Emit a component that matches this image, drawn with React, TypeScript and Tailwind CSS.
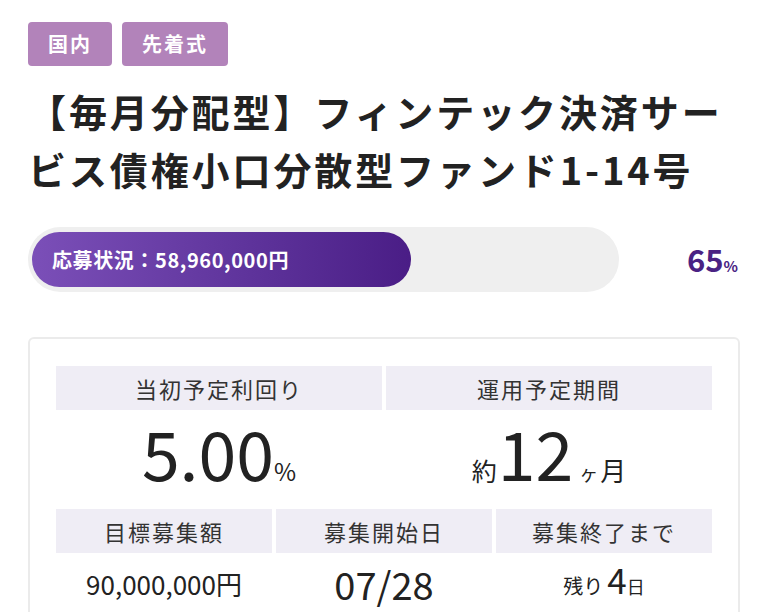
import React from "react";

const jp = { fontFamily: '"Noto Sans CJK JP", "Noto Sans", sans-serif' };

function Tag({ children }: { children: React.ReactNode }) {
  return (
    <span className="flex h-[44px] items-center rounded-[4px] bg-[#b283ba] px-5 text-[20px] font-bold tracking-[2px] text-white">
      {children}
    </span>
  );
}

function Label({ children }: { children: React.ReactNode }) {
  return (
    <div className="flex h-[44px] items-center justify-center bg-[#efedf5] text-[22px] tracking-[2px] text-[#333]">
      {children}
    </div>
  );
}

export default function App() {
  const rate = 65;

  return (
    <div className="h-[612px] overflow-hidden bg-white px-7 pt-[22px]" style={jp}>
      {/* tags */}
      <div className="flex gap-[10px]">
        <Tag>国内</Tag>
        <Tag>先着式</Tag>
      </div>

      {/* title */}
      <h1 className="mt-4 text-[38px] font-bold leading-[58px] tracking-[2.9px] text-[#222]">
        【毎月分配型】フィンテック決済サービス債権小口分散型ファンド1-14号
      </h1>

      {/* progress */}
      <div className="mt-[29px] flex items-center">
        <div className="h-[65px] flex-1 rounded-full bg-[#efefef] px-1 py-[5px]">
          <div
            className="flex h-full items-center rounded-full bg-gradient-to-r from-[#7b4fb8] to-[#4a1d86] pl-5"
            style={{ width: `${rate}%` }}
          >
            <span className="whitespace-nowrap text-[20px] font-bold tracking-[0.6px] text-white">
              応募状況：58,960,000円
            </span>
          </div>
        </div>
        <div className="w-[121px] pr-[2px] text-right font-bold text-[#4a2283]">
          <span className="text-[31px]">{rate}</span>
          <span className="text-[15px]">%</span>
        </div>
      </div>

      {/* details card */}
      <div className="mt-[45px] rounded-md border-2 border-[#ebebeb] px-[26px] pt-[27px] pb-6">
        <div className="grid grid-cols-2 gap-x-1">
          <div>
            <Label>当初予定利回り</Label>
            <div className="flex h-[95px] items-baseline justify-center pt-[8px] text-[#222]">
              <span className="text-[68px] leading-none">5.00</span>
              <span className="text-[24px]">%</span>
            </div>
          </div>
          <div>
            <Label>運用予定期間</Label>
            <div className="flex h-[95px] items-baseline justify-center pt-[8px] text-[#222]">
              <span className="text-[25px]">約</span>
              <span className="ml-px text-[68px] leading-none">12</span>
              <span className="ml-[6px] text-[19px]">ヶ</span>
              <span className="ml-[2px] text-[26px]">月</span>
            </div>
          </div>
        </div>

        <div className="mt-1 grid grid-cols-3 gap-x-1">
          <div>
            <Label>目標募集額</Label>
            <div className="flex h-[60px] items-center justify-center text-[26px] text-[#222]">
              90,000,000円
            </div>
          </div>
          <div>
            <Label>募集開始日</Label>
            <div className="flex h-[60px] items-center justify-center text-[38px] text-[#222]">
              07/28
            </div>
          </div>
          <div>
            <Label>募集終了まで</Label>
            <div className="flex h-[60px] items-baseline justify-center pt-[8px] text-[#222]">
              <span className="text-[20px]">残り</span>
              <span className="ml-1 text-[35px] leading-none">4</span>
              <span className="text-[18px]">日</span>
            </div>
          </div>
        </div>
      </div>
    </div>
  );
}
